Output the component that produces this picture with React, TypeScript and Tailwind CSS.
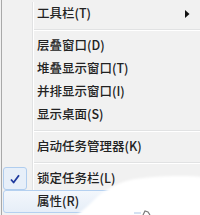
const font = { fontFamily: '"Noto Sans CJK SC", "Microsoft YaHei", sans-serif' };

type Item =
  | { kind: "item"; label: string; sub?: boolean; checked?: boolean; hot?: boolean }
  | { kind: "sep" };

const items: Item[] = [
  { kind: "item", label: "工具栏(T)", sub: true },
  { kind: "sep" },
  { kind: "item", label: "层叠窗口(D)" },
  { kind: "item", label: "堆叠显示窗口(T)" },
  { kind: "item", label: "并排显示窗口(I)" },
  { kind: "item", label: "显示桌面(S)" },
  { kind: "sep" },
  { kind: "item", label: "启动任务管理器(K)" },
  { kind: "sep" },
  { kind: "item", label: "锁定任务栏(L)", checked: true },
  { kind: "item", label: "属性(R)", hot: true },
];

function Check() {
  return (
    <svg width="12" height="12" viewBox="0 0 12 12">
      <path d="M2 6.5 L4.6 9.5 L10 2.2" fill="none" stroke="#1f3a9e" strokeWidth="1.8" strokeLinejoin="round" />
    </svg>
  );
}

function Row({ item }: { item: Extract<Item, { kind: "item" }> }) {
  if (item.hot) {
    return (
      <div className="h-[23px] ml-[1px] flex items-center rounded-[3px] border border-[#b4d0f0] bg-gradient-to-b from-[#f3f7fc] to-[#e6eef8]">
        <span className="pl-[33px] text-[12.5px] font-medium text-[#222] leading-none">{item.label}</span>
      </div>
    );
  }
  return (
    <div className="h-[23px] flex">
      <div className="w-[31px] border-r border-[#e1e2e3] flex items-stretch">
        {item.checked && (
          <div className="ml-[1px] w-[24px] rounded-[3px] border border-[#b0cdee] bg-[#e7eff9] flex items-center justify-center">
            <Check />
          </div>
        )}
      </div>
      <div className="flex-1 border-l border-white flex items-center pl-[3px] pr-[10px]">
        <span className="flex-1 text-[12.5px] font-medium text-[#222] leading-none">{item.label}</span>
        {item.sub && (
          <svg width="5" height="8" viewBox="0 0 5 8">
            <path d="M0 0 L4.5 4 L0 8 Z" fill="#111" />
          </svg>
        )}
      </div>
    </div>
  );
}

function Separator() {
  return (
    <div className="h-[9px] flex">
      <div className="w-[31px] border-r border-[#e1e2e3]" />
      <div className="flex-1 border-l border-white flex flex-col justify-center">
        <div className="h-[1px] bg-[#e1e2e3]" />
        <div className="h-[1px] bg-white" />
      </div>
    </div>
  );
}

export default function App() {
  return (
    <div className="w-[200px] h-[215px] overflow-hidden relative bg-[#f1f1f1]" style={font}>
      <div className="ml-[1px] h-full border-l border-[#a9a9a9] pt-[2px] flex flex-col">
        {items.map((it, i) =>
          it.kind === "sep" ? <Separator key={i} /> : <Row key={i} item={it} />
        )}
      </div>
      <svg className="absolute left-0 top-0" width="200" height="215" viewBox="0 0 200 215">
        <defs>
          <filter id="soft" x="-10%" y="-10%" width="120%" height="120%">
            <feGaussianBlur stdDeviation="1.2" />
          </filter>
        </defs>
        <path
          d="M202 177 C185 175 150 176 130 180 C114 184 100 193 92 202 C86 208 80 212 76 216 L202 216 Z"
          fill="#ffffff"
          filter="url(#soft)"
        />
        <path d="M134 213 L141 213" stroke="#c7d9ee" strokeWidth="1.5" />
        <path d="M143 215 L145 211 L148 212 L150 215" fill="none" stroke="#7a7a7a" strokeWidth="1.2" />
      </svg>
    </div>
  );
}
